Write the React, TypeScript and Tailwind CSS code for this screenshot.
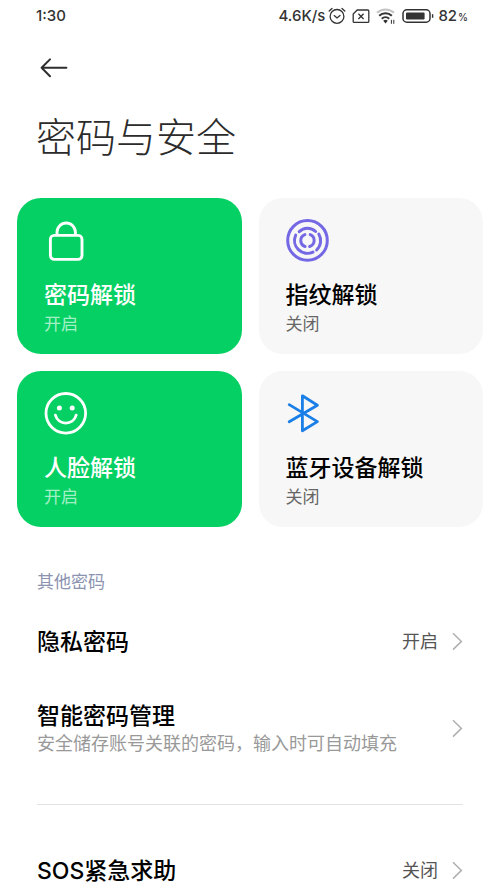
import type { ReactNode } from "react";

function StatusBar() {
  return (
    <div className="flex h-8 items-center justify-between pl-9 pr-8 text-[15px] font-medium leading-8 text-[#333333]">
      <span>1:30</span>
      <div className="flex items-center">
        <span className="mr-[3px]">4.6K/s</span>
        <svg
          className="mr-[6px] h-[18px] w-[18px]"
          viewBox="0 0 18 18"
          fill="none"
          stroke="currentColor"
          strokeWidth="1.3"
          strokeLinecap="round"
        >
          <circle cx="9" cy="9.4" r="6.9" />
          <path d="M6.2 8.6 9 11l3-2.6M1.2 4 4 1.4M16.8 4 14 1.4" />
        </svg>
        <svg
          className="mr-[6px] h-[18px] w-[18px]"
          viewBox="0 0 18 18"
          fill="none"
          stroke="currentColor"
          strokeWidth="1.3"
        >
          <path d="M5.2 3h10.6a1 1 0 0 1 1 1v10.4a1 1 0 0 1-1 1H2.2a1 1 0 0 1-1-1V7z" />
          <path d="m6.4 6.8 5.2 5.2M11.6 6.8 6.4 12" />
        </svg>
        <svg
          className="mr-[6px] h-[18px] w-5"
          viewBox="0 0 20 18"
          fill="none"
          stroke="currentColor"
          strokeWidth="2"
        >
          <path d="M1 5.8a12.4 12.4 0 0 1 17 0" stroke="#c4c4c4" />
          <path d="M3.2 8.8a9 9 0 0 1 12.6 0M5.8 11.7a5.4 5.4 0 0 1 7.4 0" />
          <path d="M7.2 13.8a3.4 3.4 0 0 1 4.6 0L9.5 16.4z" fill="currentColor" stroke="none" />
          <path d="M15.4 12.8v4M17.8 12.8v4" strokeWidth="1" />
        </svg>
        <svg className="mr-[4px] h-[14px] w-8" viewBox="0 0 32 14" fill="none">
          <rect x="1" y="0.8" width="27" height="12.4" rx="3.8" stroke="currentColor" strokeWidth="1.5" />
          <rect x="4" y="3.6" width="18.6" height="6.8" rx="1" fill="currentColor" />
          <path d="M30.6 5.2v3.6" stroke="currentColor" strokeWidth="1.4" />
        </svg>
        <span>
          82<span className="ml-px text-[10px]">%</span>
        </span>
      </div>
    </div>
  );
}

function LockIcon() {
  return (
    <svg
      className="h-[43px] w-[43px]"
      viewBox="0 0 43 43"
      fill="none"
      stroke="currentColor"
      strokeWidth="2.9"
    >
      <rect x="6.4" y="16.4" width="31.6" height="24" rx="3.8" />
      <path d="M13 16.4v-3.2a9.2 9.2 0 0 1 18.4 0v3.2" />
    </svg>
  );
}

function FaceIcon() {
  return (
    <svg
      className="h-[43px] w-[43px]"
      viewBox="0 0 43 43"
      fill="none"
      stroke="currentColor"
      strokeWidth="2.8"
      strokeLinecap="round"
    >
      <circle cx="21.8" cy="21.3" r="19.8" />
      <path d="M11.4 23.2a10.8 10.8 0 0 0 20.8 0" />
      <circle cx="15.4" cy="16" r="2.5" fill="currentColor" stroke="none" />
      <circle cx="28.2" cy="16" r="2.5" fill="currentColor" stroke="none" />
    </svg>
  );
}

function FingerprintIcon() {
  return (
    <svg
      className="h-[43px] w-[43px] text-[#7468e4]"
      viewBox="0 0 43 43"
      fill="none"
      stroke="currentColor"
      strokeWidth="3"
      strokeLinecap="round"
    >
      <circle cx="21.5" cy="21.4" r="19.8" />
      <path d="M13.2 12.7a12 12 0 0 1 16.4-.2" />
      <path d="M9.7 16.1a12.9 12.9 0 0 0 17.3 17" />
      <path d="M32.8 15a12.9 12.9 0 0 1-2.2 16" />
      <path d="M18.9 15.6a6.3 6.3 0 0 0 .2 11.9" />
      <path d="M24.2 15.6a6.3 6.3 0 0 1-.6 11.9" />
    </svg>
  );
}

function BluetoothIcon() {
  return (
    <svg
      className="h-[43px] w-[43px] text-[#1a7fe6]"
      viewBox="0 0 43 43"
      fill="none"
      stroke="currentColor"
      strokeWidth="2.8"
      strokeLinecap="round"
      strokeLinejoin="round"
    >
      <path d="M3.2 12.6 31.4 29.6 16.4 38.8V3.8l15 9.4L3.2 29.8" />
    </svg>
  );
}

function Chevron() {
  return (
    <svg
      className="h-5 w-[11px] shrink-0 text-[#b0b0b0]"
      viewBox="0 0 11 20"
      fill="none"
      stroke="currentColor"
      strokeWidth="1.5"
    >
      <path d="m1 1.2 8.4 8.2L1 17.6" />
    </svg>
  );
}

type CardProps = {
  icon: ReactNode;
  title: string;
  status: string;
  active?: boolean;
};

function UnlockCard({ icon, title, status, active }: CardProps) {
  return (
    <button
      type="button"
      className={
        active
          ? "flex flex-col items-start rounded-3xl bg-[#05d063] px-[27px] pb-[18px] pt-[21px] text-left text-white"
          : "flex flex-col items-start rounded-3xl bg-[#f7f7f7] px-[27px] pb-[18px] pt-[21px] text-left text-black"
      }
    >
      {icon}
      <span className="mt-[18px] text-[23px] font-medium leading-[30px]">{title}</span>
      <span
        className={
          active
            ? "mt-[2px] text-[17px] leading-6 text-[#a4f0c6]"
            : "mt-[2px] text-[17px] leading-6 text-[#666666]"
        }
      >
        {status}
      </span>
    </button>
  );
}

type RowProps = {
  title: string;
  description?: string;
  value?: string;
};

function SettingRow({ title, description, value }: RowProps) {
  return (
    <button type="button" className="flex w-full items-center justify-between text-left">
      <span className="flex flex-col">
        <span className="text-[23px] font-medium leading-[30px] text-black">{title}</span>
        {description && (
          <span className="text-[18px] leading-[26px] text-[#999999]">{description}</span>
        )}
      </span>
      <span className="flex items-center gap-[14px]">
        {value && <span className="text-[18px] leading-[26px] text-[#555555]">{value}</span>}
        <Chevron />
      </span>
    </button>
  );
}

export default function App() {
  return (
    <div
      lang="zh-CN"
      className="min-h-screen bg-white font-['Inter','Noto_Sans_CJK_SC',sans-serif]"
    >
      <StatusBar />

      <header className="px-9 pt-6">
        <button type="button" aria-label="返回" className="block px-1 text-[#2e2e2e]">
          <svg
            className="h-6 w-7"
            viewBox="0 0 28 24"
            fill="none"
            stroke="currentColor"
            strokeWidth="2"
            strokeLinecap="round"
            strokeLinejoin="round"
          >
            <path d="M26.4 11.8H1.6M10 3.4l-8.4 8.4 8.4 8.4" />
          </svg>
        </button>
        <h1 className="mt-[30px] text-[40px] font-light leading-[56px] text-[#2b2b2b]">
          密码与安全
        </h1>
      </header>

      <main>
        <div className="mt-8 grid grid-cols-2 gap-[17px] px-[17px]">
          <UnlockCard icon={<LockIcon />} title="密码解锁" status="开启" active />
          <UnlockCard icon={<FingerprintIcon />} title="指纹解锁" status="关闭" />
          <UnlockCard icon={<FaceIcon />} title="人脸解锁" status="开启" active />
          <UnlockCard icon={<BluetoothIcon />} title="蓝牙设备解锁" status="关闭" />
        </div>

        <section className="mt-[42px] px-[37px]">
          <h2 className="text-[17px] leading-[26px] text-[#8c93b0]">其他密码</h2>
          <div className="mt-8 flex flex-col gap-11">
            <SettingRow title="隐私密码" value="开启" />
            <SettingRow
              title="智能密码管理"
              description="安全储存账号关联的密码，输入时可自动填充"
            />
          </div>
          <hr className="mb-[51px] mt-[47px] border-[#e2e2e2]" />
          <SettingRow title="SOS紧急求助" value="关闭" />
        </section>
      </main>
    </div>
  );
}
